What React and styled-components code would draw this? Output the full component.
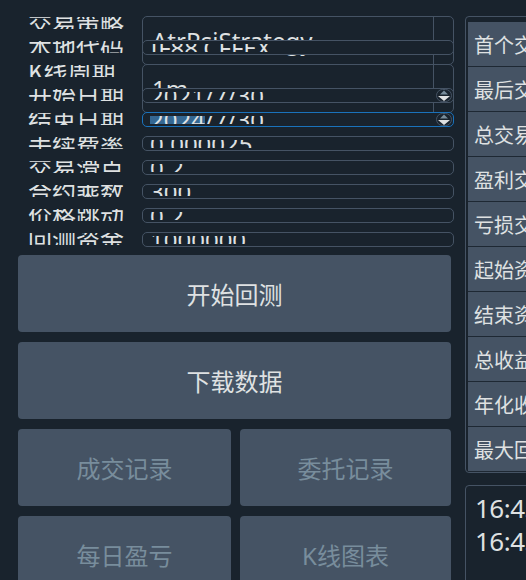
import React from 'react';
import styled, { createGlobalStyle } from 'styled-components';

const GlobalStyle = createGlobalStyle`
    html, body {
        margin: 0;
        padding: 0;
        background: #19232D;
    }
    body {
        font-family: "Noto Sans", "Noto Sans CJK SC", sans-serif;
        color: #DFE1E2;
        overflow: hidden;
    }
`;

const Page = styled.div`
    display: flex;
    width: 526px;
    height: 580px;
    box-sizing: border-box;
    padding: 16px 0 0 18px;
    overflow: hidden;
`;

const LeftColumn = styled.div`
    flex: none;
    width: 436px;
    display: flex;
    flex-direction: column;
`;

const Form = styled.div`
    display: grid;
    grid-template-columns: 124px 312px;
    grid-template-rows: repeat(9, 24px) 23px;
`;

const Label = styled.div`
    position: relative;
    grid-column: 1;
    align-self: start;
    margin-top: 1px;
    height: 12px;
    line-height: 12px;
    padding-left: 10px;
    overflow: hidden;
    white-space: nowrap;
    font-family: "Noto Sans CJK SC", sans-serif;
    font-size: 24px;
`;

const Field = styled.div`
    position: relative;
    grid-column: 2;
    align-self: start;
    display: flex;
    box-sizing: border-box;
    height: ${p => (p.$tall ? '49px' : '15px')};
    border: 1px solid ${p => (p.$focus ? '#1A72BB' : '#455364')};
    border-radius: 5px;
    background: #19232D;
`;

const FieldText = styled.div`
    flex: 1;
    height: 8px;
    margin: 3px 0 2px 7px;
    line-height: 8px;
    overflow: hidden;
    white-space: nowrap;
    font-size: 24px;
`;

const Selected = styled.span`
    background: #346792;
`;

const ComboText = styled.div`
    flex: 1;
    display: flex;
    align-items: center;
    padding-left: 9px;
    overflow: hidden;
    white-space: nowrap;
    font-size: 24px;
`;

const DropArea = styled.div`
    flex: none;
    width: 19px;
    border-left: 1px solid #455364;
`;

const SpinArea = styled.div`
    flex: none;
    width: 18px;
    display: flex;
    align-items: center;
    justify-content: center;
`;

const ButtonStack = styled.div`
    display: flex;
    flex-direction: column;
    gap: 10px;
    width: 433px;
`;

const ButtonPair = styled.div`
    display: grid;
    grid-template-columns: 213px 211px;
    gap: 9px;
`;

const Button = styled.button`
    height: 77px;
    border: none;
    border-radius: 4px;
    background: #455364;
    color: ${p => (p.disabled ? '#788D9C' : '#DFE1E2')};
    font-family: "Noto Sans", "Noto Sans CJK SC", sans-serif;
    font-size: 24px;
    padding: 0;
`;

const RightColumn = styled.div`
    flex: none;
    width: 300px;
    margin-left: 11px;
    display: flex;
    flex-direction: column;
    gap: 12px;
`;

const ResultFrame = styled.div`
    border: 1px solid #455364;
    border-radius: 4px;
    padding: 5px 0 0 2px;
`;

const ResultRow = styled.div`
    height: 44px;
    border-bottom: 1px solid #1E2833;
    background: #455364;
    display: flex;
    align-items: center;
    padding-left: 6px;
    white-space: nowrap;
    font-family: "Noto Sans CJK SC", sans-serif;
    font-size: 20px;
`;

const LogFrame = styled.div`
    flex: none;
    height: 120px;
    border: 1px solid #455364;
    border-radius: 4px;
    padding: 6px 0 0 9px;
    font-size: 26px;
    line-height: 33px;
    letter-spacing: -0.5px;
    white-space: nowrap;
`;

const SpinArrows = () => (
    <svg width="16" height="13" viewBox="0 0 16 13">
        <rect x="0.5" y="0.5" width="15" height="12" rx="6" fill="none" stroke="#455364" />
        <polygon points="4,5.5 8,1.5 12,5.5" fill="#788D9C" />
        <polygon points="2,7 14,7 8,12" fill="#DFE1E2" />
    </svg>
);

const rows = [
    { label: '交易策略', kind: 'combo', value: 'AtrRsiStrategy' },
    { label: '本地代码', value: 'IF88.CFFEX' },
    { label: 'K线周期', kind: 'combo', value: '1m' },
    { label: '开始日期', kind: 'date', value: '2021/7/30' },
    { label: '结束日期', kind: 'date', value: '2024/7/30', focus: true },
    { label: '手续费率', value: '0.000025' },
    { label: '交易滑点', value: '0.2' },
    { label: '合约乘数', value: '300' },
    { label: '价格跳动', value: '0.2' },
    { label: '回测资金', value: '1000000' },
];

const results = [
    '首个交易日', '最后交易日', '总交易日', '盈利交易日', '亏损交易日',
    '起始资金', '结束资金', '总收益率', '年化收益', '最大回撤',
];

const renderField = (row) => {
    if (row.kind === 'combo') {
        return (
            <Field $tall>
                <ComboText>{row.value}</ComboText>
                <DropArea />
            </Field>
        );
    }
    if (row.kind === 'date') {
        const [year, ...rest] = row.value.split('/');
        return (
            <Field $focus={row.focus}>
                <FieldText>
                    {row.focus ? <Selected>{year}</Selected> : year}/{rest.join('/')}
                </FieldText>
                <SpinArea><SpinArrows /></SpinArea>
            </Field>
        );
    }
    return (
        <Field>
            <FieldText>{row.value}</FieldText>
        </Field>
    );
};

const App = () => {
    return (
        <Page>
            <GlobalStyle />
            <LeftColumn>
                <Form>
                    {rows.map(row => (
                        <React.Fragment key={row.label}>
                            <Label>{row.label}</Label>
                            {renderField(row)}
                        </React.Fragment>
                    ))}
                </Form>
                <ButtonStack>
                    <Button>开始回测</Button>
                    <Button>下载数据</Button>
                    <ButtonPair>
                        <Button disabled>成交记录</Button>
                        <Button disabled>委托记录</Button>
                    </ButtonPair>
                    <ButtonPair>
                        <Button disabled>每日盈亏</Button>
                        <Button disabled>K线图表</Button>
                    </ButtonPair>
                </ButtonStack>
            </LeftColumn>
            <RightColumn>
                <ResultFrame>
                    {results.map(name => (
                        <ResultRow key={name}>{name}</ResultRow>
                    ))}
                </ResultFrame>
                <LogFrame>
                    <div>16:45:08 开始加载历史数据</div>
                    <div>16:45:09 历史数据加载完成</div>
                </LogFrame>
            </RightColumn>
        </Page>
    );
};

export default App;
